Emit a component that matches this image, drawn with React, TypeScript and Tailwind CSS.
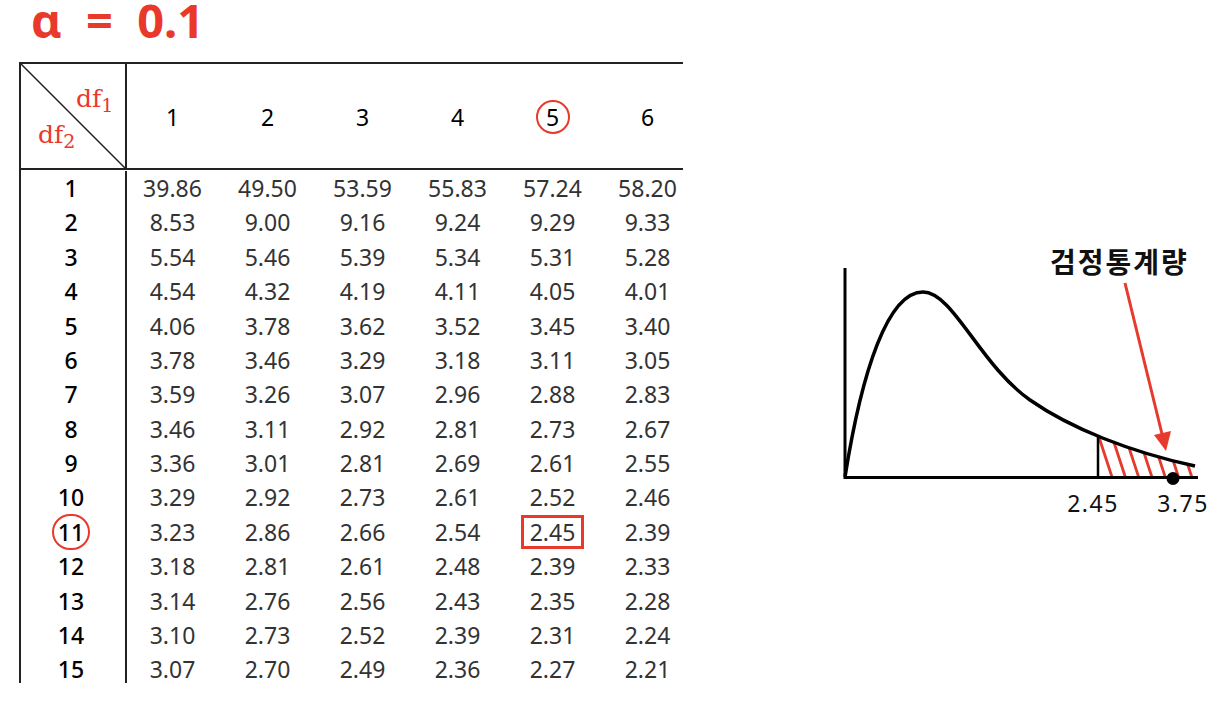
import React from 'react';

const cols = ['1', '2', '3', '4', '5', '6'];

const rows: [string, string[]][] = [
  ['1', ['39.86', '49.50', '53.59', '55.83', '57.24', '58.20']],
  ['2', ['8.53', '9.00', '9.16', '9.24', '9.29', '9.33']],
  ['3', ['5.54', '5.46', '5.39', '5.34', '5.31', '5.28']],
  ['4', ['4.54', '4.32', '4.19', '4.11', '4.05', '4.01']],
  ['5', ['4.06', '3.78', '3.62', '3.52', '3.45', '3.40']],
  ['6', ['3.78', '3.46', '3.29', '3.18', '3.11', '3.05']],
  ['7', ['3.59', '3.26', '3.07', '2.96', '2.88', '2.83']],
  ['8', ['3.46', '3.11', '2.92', '2.81', '2.73', '2.67']],
  ['9', ['3.36', '3.01', '2.81', '2.69', '2.61', '2.55']],
  ['10', ['3.29', '2.92', '2.73', '2.61', '2.52', '2.46']],
  ['11', ['3.23', '2.86', '2.66', '2.54', '2.45', '2.39']],
  ['12', ['3.18', '2.81', '2.61', '2.48', '2.39', '2.33']],
  ['13', ['3.14', '2.76', '2.56', '2.43', '2.35', '2.28']],
  ['14', ['3.10', '2.73', '2.52', '2.39', '2.31', '2.24']],
  ['15', ['3.07', '2.70', '2.49', '2.36', '2.27', '2.21']],
];

const curve =
  'M845,477 C862,370 888,292 923,292 C953,292 980,365 1030,400 C1070,428 1130,452 1195,466';

// F-distribution sketch with the rejection region hatched
const FChart = () => {
  const hatch: number[] = [];
  for (let xb = 1112; xb < 1215; xb += 13.3) hatch.push(xb);
  return (
    <svg width={394} height={290} viewBox="830 240 394 290">
      <defs>
        <clipPath id="tail">
          <path d={curve + ' L1195,477 L845,477 Z'} />
        </clipPath>
      </defs>
      <g clipPath="url(#tail)">
        {hatch.map((xb) => (
          <line key={xb} x1={xb - 18} y1={422} x2={xb} y2={477} stroke="#e53a2c" strokeWidth={2.8} />
        ))}
      </g>
      {/* keep the hatch to the right of the critical value */}
      <rect x={845} y={400} width={253} height={76} fill="white" />
      <line x1={845} y1={268} x2={845} y2={479} stroke="#000" strokeWidth={3} />
      <line x1={844} y1={477.5} x2={1198} y2={477.5} stroke="#000" strokeWidth={3} />
      <path d={curve} fill="none" stroke="#000" strokeWidth={3.5} />
      <line x1={1098} y1={437} x2={1098} y2={477} stroke="#000" strokeWidth={2.5} />
      <circle cx={1173} cy={478.5} r={6.5} fill="#000" />
      <line x1={1125} y1={283} x2={1162} y2={434} stroke="#e53a2c" strokeWidth={3} />
      <polygon points="1166,451 1171,431 1154,435" fill="#e53a2c" />
      <text
        x={1050}
        y={273}
        fontSize={28}
        fontWeight={700}
        letterSpacing={2}
        fill="#111"
        style={{ fontFamily: '"Noto Sans CJK KR", "Noto Sans", sans-serif' }}
      >
        검정통계량
      </text>
      <text
        x={1093}
        y={512}
        fontSize={23}
        textAnchor="middle"
        fill="#111"
        letterSpacing={1.5}
        style={{ fontFamily: '"Noto Sans", sans-serif' }}
      >
        2.45
      </text>
      <text
        x={1183}
        y={512}
        fontSize={23}
        textAnchor="middle"
        fill="#111"
        letterSpacing={1.5}
        style={{ fontFamily: '"Noto Sans", sans-serif' }}
      >
        3.75
      </text>
    </svg>
  );
};

export default function App() {
  return (
    <div className="w-[1224px] h-[724px] bg-white overflow-hidden flex font-['Noto_Sans',sans-serif]">
      {/* Left: alpha + F table */}
      <div className="w-[830px] flex flex-col">
        <div className="h-[40px] pl-[31px] text-[47px] leading-[40px] font-bold text-[#e8392b] [word-spacing:12px]">
          α = 0.1
        </div>
        <div className="ml-[19px] mt-[22px] w-[664px] h-[621px] border-t-2 border-l-2 border-[#222] flex flex-col">
          {/* header */}
          <div className="flex h-[106px] border-b-2 border-[#222] shrink-0">
            <div className="relative w-[106px] shrink-0 border-r-2 border-[#222]">
              <svg className="absolute inset-0" width={104} height={104} viewBox="0 0 104 104">
                <line x1={0} y1={0} x2={104} y2={104} stroke="#222" strokeWidth={1.5} />
              </svg>
              <div className="absolute left-[55px] top-[22px] font-['DejaVu_Serif',serif] text-[25px] leading-none text-[#e8392b]">
                df<sub className="text-[19px]">1</sub>
              </div>
              <div className="absolute left-[17px] top-[58px] font-['DejaVu_Serif',serif] text-[25px] leading-none text-[#e8392b]">
                df<sub className="text-[19px]">2</sub>
              </div>
            </div>
            {cols.map((c) => (
              <div
                key={c}
                className="w-[95px] shrink-0 flex items-center justify-center pr-[4px] pt-[2px] text-[23px] text-black"
              >
                {c === '5' ? (
                  <span className="w-[34px] h-[34px] rounded-full border-2 border-[#e8392b] flex items-center justify-center">
                    5
                  </span>
                ) : (
                  c
                )}
              </div>
            ))}
          </div>
          {/* body */}
          <div className="flex pt-px flex-1 min-h-0">
            <div className="w-[106px] shrink-0 border-r-2 border-[#222] flex flex-col">
              {rows.map(([r]) => (
                <div
                  key={r}
                  className="h-[34.4px] shrink-0 flex items-center justify-center pr-[4px] text-[23px] font-medium text-black"
                >
                  {r === '11' ? (
                    <span className="w-[38px] h-[36px] rounded-full border-2 border-[#e8392b] flex items-center justify-center">
                      11
                    </span>
                  ) : (
                    r
                  )}
                </div>
              ))}
            </div>
            <div className="flex flex-col">
              {rows.map(([r, vals]) => (
                <div key={r} className="h-[34.4px] shrink-0 flex">
                  {vals.map((v, i) => (
                    <div
                      key={i}
                      className="w-[95px] shrink-0 flex items-center justify-center pr-[4px] text-[23px] text-[#333]"
                    >
                      {r === '11' && i === 4 ? (
                        <span className="w-[63px] h-[34px] border-[3px] border-[#e8392b] flex items-center justify-center">
                          {v}
                        </span>
                      ) : (
                        v
                      )}
                    </div>
                  ))}
                </div>
              ))}
            </div>
          </div>
        </div>
      </div>
      {/* Right: distribution sketch */}
      <div className="flex-1 pt-[240px]">
        <FChart />
      </div>
    </div>
  );
}
